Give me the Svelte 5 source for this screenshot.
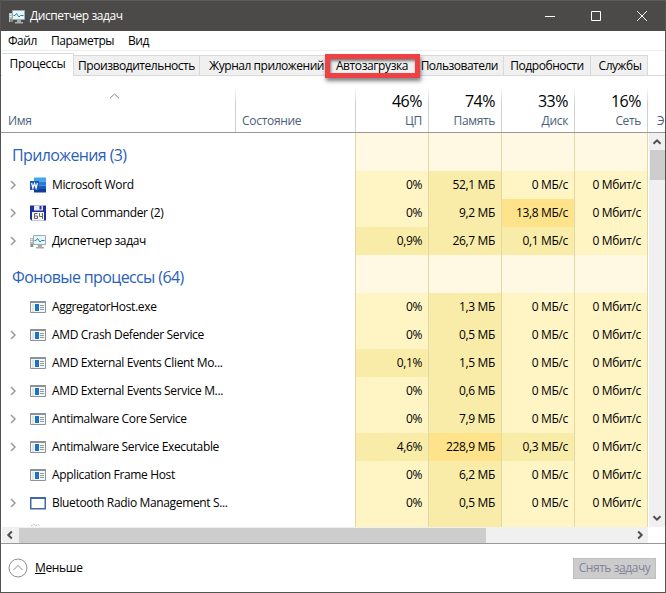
<script lang="ts">
    type Process = {
        name: string
        icon: string
        expandable: boolean
        cpu: string
        memory: string
        disk: string
    }

    let selectedTab = $state('processes')

    const tabs = [
        { id: 'processes', label: 'Процессы' },
        { id: 'performance', label: 'Производительность' },
        { id: 'history', label: 'Журнал приложений' },
        { id: 'startup', label: 'Автозагрузка' },
        { id: 'users', label: 'Пользователи' },
        { id: 'details', label: 'Подробности' },
        { id: 'services', label: 'Службы' }
    ]

    const totals = [
        { value: '46%', label: 'ЦП' },
        { value: '74%', label: 'Память' },
        { value: '33%', label: 'Диск' },
        { value: '16%', label: 'Сеть' }
    ]

    const apps: Process[] = [
        { name: 'Microsoft Word', icon: 'word', expandable: true, cpu: '0%', memory: '52,1 МБ', disk: '0 МБ/с' },
        { name: 'Total Commander (2)', icon: 'floppy', expandable: true, cpu: '0%', memory: '9,2 МБ', disk: '13,8 МБ/с' },
        { name: 'Диспетчер задач', icon: 'monitor', expandable: true, cpu: '0,9%', memory: '26,7 МБ', disk: '0,1 МБ/с' }
    ]

    const background: Process[] = [
        { name: 'AggregatorHost.exe', icon: 'window', expandable: false, cpu: '0%', memory: '1,3 МБ', disk: '0 МБ/с' },
        { name: 'AMD Crash Defender Service', icon: 'window', expandable: true, cpu: '0%', memory: '0,5 МБ', disk: '0 МБ/с' },
        { name: 'AMD External Events Client Mo...', icon: 'window', expandable: false, cpu: '0,1%', memory: '1,5 МБ', disk: '0 МБ/с' },
        { name: 'AMD External Events Service M...', icon: 'window', expandable: true, cpu: '0%', memory: '0,6 МБ', disk: '0 МБ/с' },
        { name: 'Antimalware Core Service', icon: 'window', expandable: true, cpu: '0%', memory: '7,9 МБ', disk: '0 МБ/с' },
        { name: 'Antimalware Service Executable', icon: 'window', expandable: true, cpu: '4,6%', memory: '228,9 МБ', disk: '0,3 МБ/с' },
        { name: 'Application Frame Host', icon: 'window', expandable: false, cpu: '0%', memory: '6,2 МБ', disk: '0 МБ/с' },
        { name: 'Bluetooth Radio Management S...', icon: 'blank', expandable: true, cpu: '0%', memory: '0,5 МБ', disk: '0 МБ/с' }
    ]

    // heat of a cell grows with its load
    function heat(value: string, high: number) {
        const amount = parseFloat(value.replace(',', '.'))
        if (amount > high) return 'high'
        return amount > 0 ? 'mid' : 'low'
    }
</script>

{#snippet icon(kind: string)}
    <svg class="icon" width="16" height="16" viewBox="0 0 16 16">
        {#if kind === 'word'}
            <path d="M4 0.5h12v4H4z" fill="#41a5ee" />
            <path d="M4 4.5h12v4H4z" fill="#2b7cd3" />
            <path d="M4 8.5h12v4H4z" fill="#185abd" />
            <path d="M4 12h12v3.5H4z" fill="#103f91" />
            <path d="M0 4h9v9H0z" fill="#1b56b4" />
            <path d="M1.6 6l1.3 5 1.6-4.6L6.1 11l1.3-5" fill="none" stroke="#fff" stroke-width="1.3" />
        {:else if kind === 'floppy'}
            <path d="M0 0.5h16v15H1.5L0 14z" fill="#1d2f9c" />
            <path d="M4 0.5h9v5H4z" fill="#e8ebf5" />
            <path d="M9.5 1h2v3.5h-2z" fill="#1d2f9c" />
            <path d="M2 7h12v8.5H2z" fill="#f4f4f2" />
            <path d="M7.5 8.5h-3v5h3v-2.500h-3M9.500 8v3.500h3M12.500 8v6" fill="none" stroke="#666" />
        {:else if kind === 'monitor'}
            <path d="M0 5h3.5v9H0z" fill="#b6bab9" />
            <path d="M0.5 6.5h2M0.5 8.5h2" stroke="#eef" />
            <path d="M1 11h2v3H1z" fill="#6ba06c" />
            <path d="M3.5 2.5h12v9h-12z" fill="#e3f7fc" stroke="#a3aaac" />
            <path d="M4.500 7.500h1.500l1.500-2 2.500 3.500 1.500-1.500H14.500" fill="none" stroke="#28809a" />
            <path d="M8 12h4v2H8zM6 14h8v1.500H6z" fill="#a9adad" />
        {:else if kind === 'window'}
            <path d="M0.5 2.5h15v11H0.5z" fill="#f5f6f6" stroke="#8b9397" />
            <path d="M0 2h16v2H0z" fill="#8b9397" />
            <path d="M2 5h2v8H2z" fill="#e3e5e5" />
            <path d="M5 5h4v7H5z" fill="#1874c4" />
            <path d="M10 6.5h4M10 8.5h4M10 10.5h4" stroke="#94999c" />
        {:else if kind === 'blank'}
            <path d="M0.75 2.75h14.500v11H0.75z" fill="#fff" stroke="#4169a5" stroke-width="1.5" />
            <path d="M0 2h16v2H0z" fill="#4169a5" />
        {:else}
            <path d="M1 5l3-2 1 2 3-1.500 2 1.500" fill="none" stroke="#bbb" stroke-dasharray="2 1" />
        {/if}
    </svg>
{/snippet}

{#snippet arrow(direction: string)}
    <svg class="arrow {direction}" width="10" height="10" viewBox="0 0 10 10">
        <path d="M1.5 6.8L5 3.3l3.5 3.5" />
    </svg>
{/snippet}

{#snippet groupRow(title: string)}
    <div class="row group">
        <h2>{title}</h2>
        <span class="heat"></span>
        <span class="heat"></span>
        <span class="heat"></span>
        <span class="heat"></span>
    </div>
{/snippet}

{#snippet processRow(process: Process)}
    <div class="row">
        <div class="name">
            <span class="expander">
                {#if process.expandable}
                    <svg width="7" height="10" viewBox="0 0 7 10">
                        <path d="M1 1l4 4-4 4" />
                    </svg>
                {/if}
            </span>
            {@render icon(process.icon)}
            <span>{process.name}</span>
        </div>
        <span class="heat {heat(process.cpu, 50)}">{process.cpu}</span>
        <span class="heat {heat(process.memory, 100)}">{process.memory}</span>
        <span class="heat {heat(process.disk, 10)}">{process.disk}</span>
        <span class="heat low">0 Мбит/с</span>
    </div>
{/snippet}

<main class="window">
    <header class="titlebar">
        {@render icon('monitor')}
        <h1>Диспетчер задач</h1>
        <div class="controls">
            <svg width="46" height="31" viewBox="0 0 46 31"><path d="M18 15.5h10" /></svg>
            <svg width="46" height="31" viewBox="0 0 46 31"><path d="M18.5 10.5h9v9h-9z" /></svg>
            <svg width="46" height="31" viewBox="0 0 46 31"><path d="M18 10l10 10M28 10L18 20" /></svg>
        </div>
    </header>

    <nav class="menu">
        <span>Файл</span>
        <span>Параметры</span>
        <span>Вид</span>
    </nav>

    <div class="tabs">
        {#each tabs as tab}
            <button class="tab {tab.id}" class:active={selectedTab === tab.id} onclick={() => (selectedTab = tab.id)}>
                <span>{tab.label}</span>
            </button>
        {/each}
    </div>

    <div class="columns">
        <div class="column name-column">
            <svg width="11" height="6" viewBox="0 0 11 6"><path d="M1 5.2L5.5 1 10 5.2" /></svg>
            <span>Имя</span>
        </div>
        <div class="column status">Состояние</div>
        {#each totals as total}
            <div class="column total">
                <strong>{total.value}</strong>
                <span>{total.label}</span>
            </div>
        {/each}
        <div class="column clipped">Э</div>
    </div>

    <div class="body">
        <div class="list">
            {@render groupRow('Приложения (3)')}
            {#each apps as process}
                {@render processRow(process)}
            {/each}
            {@render groupRow('Фоновые процессы (64)')}
            {#each background as process}
                {@render processRow(process)}
            {/each}
            <div class="row">
                <div class="name partial">
                    <span class="expander"></span>
                    {@render icon('gear')}
                </div>
                <span class="heat low"></span>
                <span class="heat mid"></span>
                <span class="heat low"></span>
                <span class="heat low"></span>
            </div>
        </div>
        <div class="scroll-y">
            {@render arrow('up')}
            <div class="thumb"></div>
            {@render arrow('down')}
        </div>
    </div>

    <div class="scroll-x">
        {@render arrow('left')}
        <div class="thumb"></div>
        {@render arrow('right')}
    </div>

    <footer>
        <button class="less">
            <svg width="20" height="20" viewBox="0 0 20 20">
                <circle cx="10" cy="10" r="9" />
                <path d="M5.5 12L10 7.5l4.5 4.5" />
            </svg>
            <span><u>М</u>еньше</span>
        </button>
        <button class="end-task" disabled>Снять з<u>а</u>дачу</button>
    </footer>
</main>

<style>
    * {
        box-sizing: border-box;
    }
    .window {
        width: 666px;
        height: 593px;
        display: flex;
        flex-direction: column;
        overflow: hidden;
        background: #fff;
        border: solid #555453;
        border-width: 0 1px 1px 1px;
        color: #000;
        font-family: "Open Sans", "Noto Sans", sans-serif;
        font-size: 12px;
        letter-spacing: -0.35px;
        line-height: 16px;
        white-space: nowrap;
    }
    svg {
        display: block;
        flex: none;
        fill: none;
    }
    button {
        font: inherit;
        letter-spacing: inherit;
        color: inherit;
        margin: 0;
        padding: 0;
        border: 0;
        background: none;
    }

    .titlebar {
        height: 31px;
        flex: none;
        display: flex;
        align-items: center;
        gap: 5px;
        padding-left: 8px;
        background: #4b4a48;
        border-top: 1px solid #5d5c5a;
        color: #fff;
    }
    h1 {
        margin: 0;
        font-size: 12px;
        font-weight: 400;
        letter-spacing: -0.45px;
    }
    .controls {
        display: flex;
        margin-left: auto;
    }
    .controls path {
        stroke: #fff;
    }

    .menu {
        height: 20px;
        flex: none;
        display: flex;
        align-items: center;
        gap: 14px;
        padding-left: 7px;
        border-bottom: 1px solid #eee;
        letter-spacing: -0.45px;
    }

    .tabs {
        height: 25px;
        flex: none;
        display: flex;
        align-items: flex-end;
        padding-left: 1px;
        border-bottom: 1px solid #d9d9d9;
        letter-spacing: -0.45px;
    }
    .tab {
        height: 20px;
        border: 1px solid #d9d9d9;
        border-width: 1px 1px 0 0;
        background: #f0f0f0;
        position: relative;
    }
    .tab.active {
        height: 23px;
        margin-bottom: -1px;
        padding-bottom: 2px;
        background: #fff;
    }
    .processes {
        width: 72px;
        letter-spacing: -0.3px;
    }
    .performance {
        width: 126px;
    }
    .history {
        width: 130px;
        text-align: right;
        padding-right: 5px;
    }
    .startup {
        width: 87px;
        padding-right: 3px;
        letter-spacing: -0.4px;
        border-right: 0;
    }
    .users {
        width: 87px;
        text-align: right;
        padding-right: 5px;
        letter-spacing: -0.5px;
    }
    .details {
        width: 87px;
    }
    .services {
        width: 57px;
        padding-left: 2px;
    }
    /* red frame around the startup tab */
    .startup::after {
        content: "";
        position: absolute;
        z-index: 1;
        left: -5px;
        top: -2px;
        width: 95px;
        height: 24px;
        box-sizing: border-box;
        border: 5px solid #ee4144;
        box-shadow: 1px 3px 4px rgba(0, 0, 0, 0.5), inset 1px 2px 3px rgba(0, 0, 0, 0.5);
    }

    .columns {
        height: 57px;
        flex: none;
        display: grid;
        grid-template-columns: 234px 120px repeat(4, 73px) 1fr;
        border-bottom: 1px solid #999;
        color: #4c607a;
    }
    .column {
        display: flex;
        flex-direction: column;
        justify-content: flex-end;
        padding-bottom: 3px;
        border-left: 1px solid;
        border-image: linear-gradient(transparent 20%, #cfcfcf 50%) 1;
        overflow: hidden;
    }
    .name-column {
        justify-content: space-between;
        padding: 17px 0 3px 7px;
        border-left: 0;
        border-image: none;
    }
    .name-column svg {
        margin-left: 101px;
        stroke: #7b8794;
    }
    .status {
        padding-left: 6px;
        letter-spacing: -0.3px;
    }
    .total {
        align-items: flex-end;
        padding-right: 6px;
    }
    .total strong {
        color: #000;
        font-size: 16px;
        font-weight: 400;
        line-height: 20px;
        letter-spacing: -0.5px;
        margin-bottom: 2px;
    }
    .clipped {
        padding-left: 9px;
    }

    .body {
        height: 394px;
        flex: none;
        display: flex;
    }
    .list {
        width: 647px;
        overflow: hidden;
        border-right: 1px solid #e2d8a4;
    }
    .row {
        height: 28px;
        display: grid;
        grid-template-columns: 354px repeat(4, 73px);
    }
    .row.group {
        height: 38px;
    }
    h2 {
        margin: 0;
        padding: 11px 0 0 11px;
        color: #2b5fb8;
        font-size: 16px;
        font-weight: 400;
        line-height: 22px;
        letter-spacing: -0.62px;
    }
    .name {
        display: flex;
        align-items: center;
        padding-left: 9px;
    }
    .name .icon {
        margin-right: 6px;
    }
    .name.partial {
        align-items: flex-start;
        padding-top: 4px;
    }
    .expander {
        width: 20px;
    }
    .expander path {
        stroke: #9b9b9b;
        stroke-width: 1.5;
    }
    .heat {
        padding: 6px 6px 0 0;
        border-left: 1px solid #e2d8a4;
        background: #fff9e4;
        text-align: right;
    }
    .heat.low {
        background: #fff4c4;
    }
    .heat.mid {
        background: #f9eca8;
    }
    .heat.high {
        background: #ffe38a;
    }

    .scroll-y {
        flex: 1;
        display: flex;
        flex-direction: column;
        align-items: center;
        margin-left: 1px;
        padding: 4px 0;
        background: #f0f0f0;
    }
    .scroll-y .thumb {
        width: 15px;
        height: 30px;
        margin: 3px 0 auto;
        background: #cdcdcd;
    }
    .arrow path {
        stroke: #505050;
        stroke-width: 2;
    }
    .down {
        transform: rotate(180deg);
    }
    .left {
        transform: rotate(-90deg);
    }
    .right {
        transform: rotate(90deg);
    }
    .scroll-x {
        width: 646px;
        height: 16px;
        flex: none;
        display: flex;
        align-items: center;
        margin-left: 1px;
        padding: 0 3px;
        background: #f0f0f0;
    }
    .scroll-x .thumb {
        width: 467px;
        height: 15px;
        margin: 0 auto 0 4px;
        background: #cdcdcd;
    }

    footer {
        flex: 1;
        display: flex;
        align-items: center;
        justify-content: space-between;
        padding: 0 9px 0 7px;
        border-top: 1px solid #999;
    }
    .less {
        display: flex;
        align-items: center;
        gap: 7px;
    }
    .less svg {
        stroke: #8e8e8e;
    }
    .end-task {
        width: 83px;
        height: 21px;
        border: 1px solid #bfbfbf;
        background: #ccc;
        color: #838499;
        letter-spacing: -0.45px;
    }
</style>
